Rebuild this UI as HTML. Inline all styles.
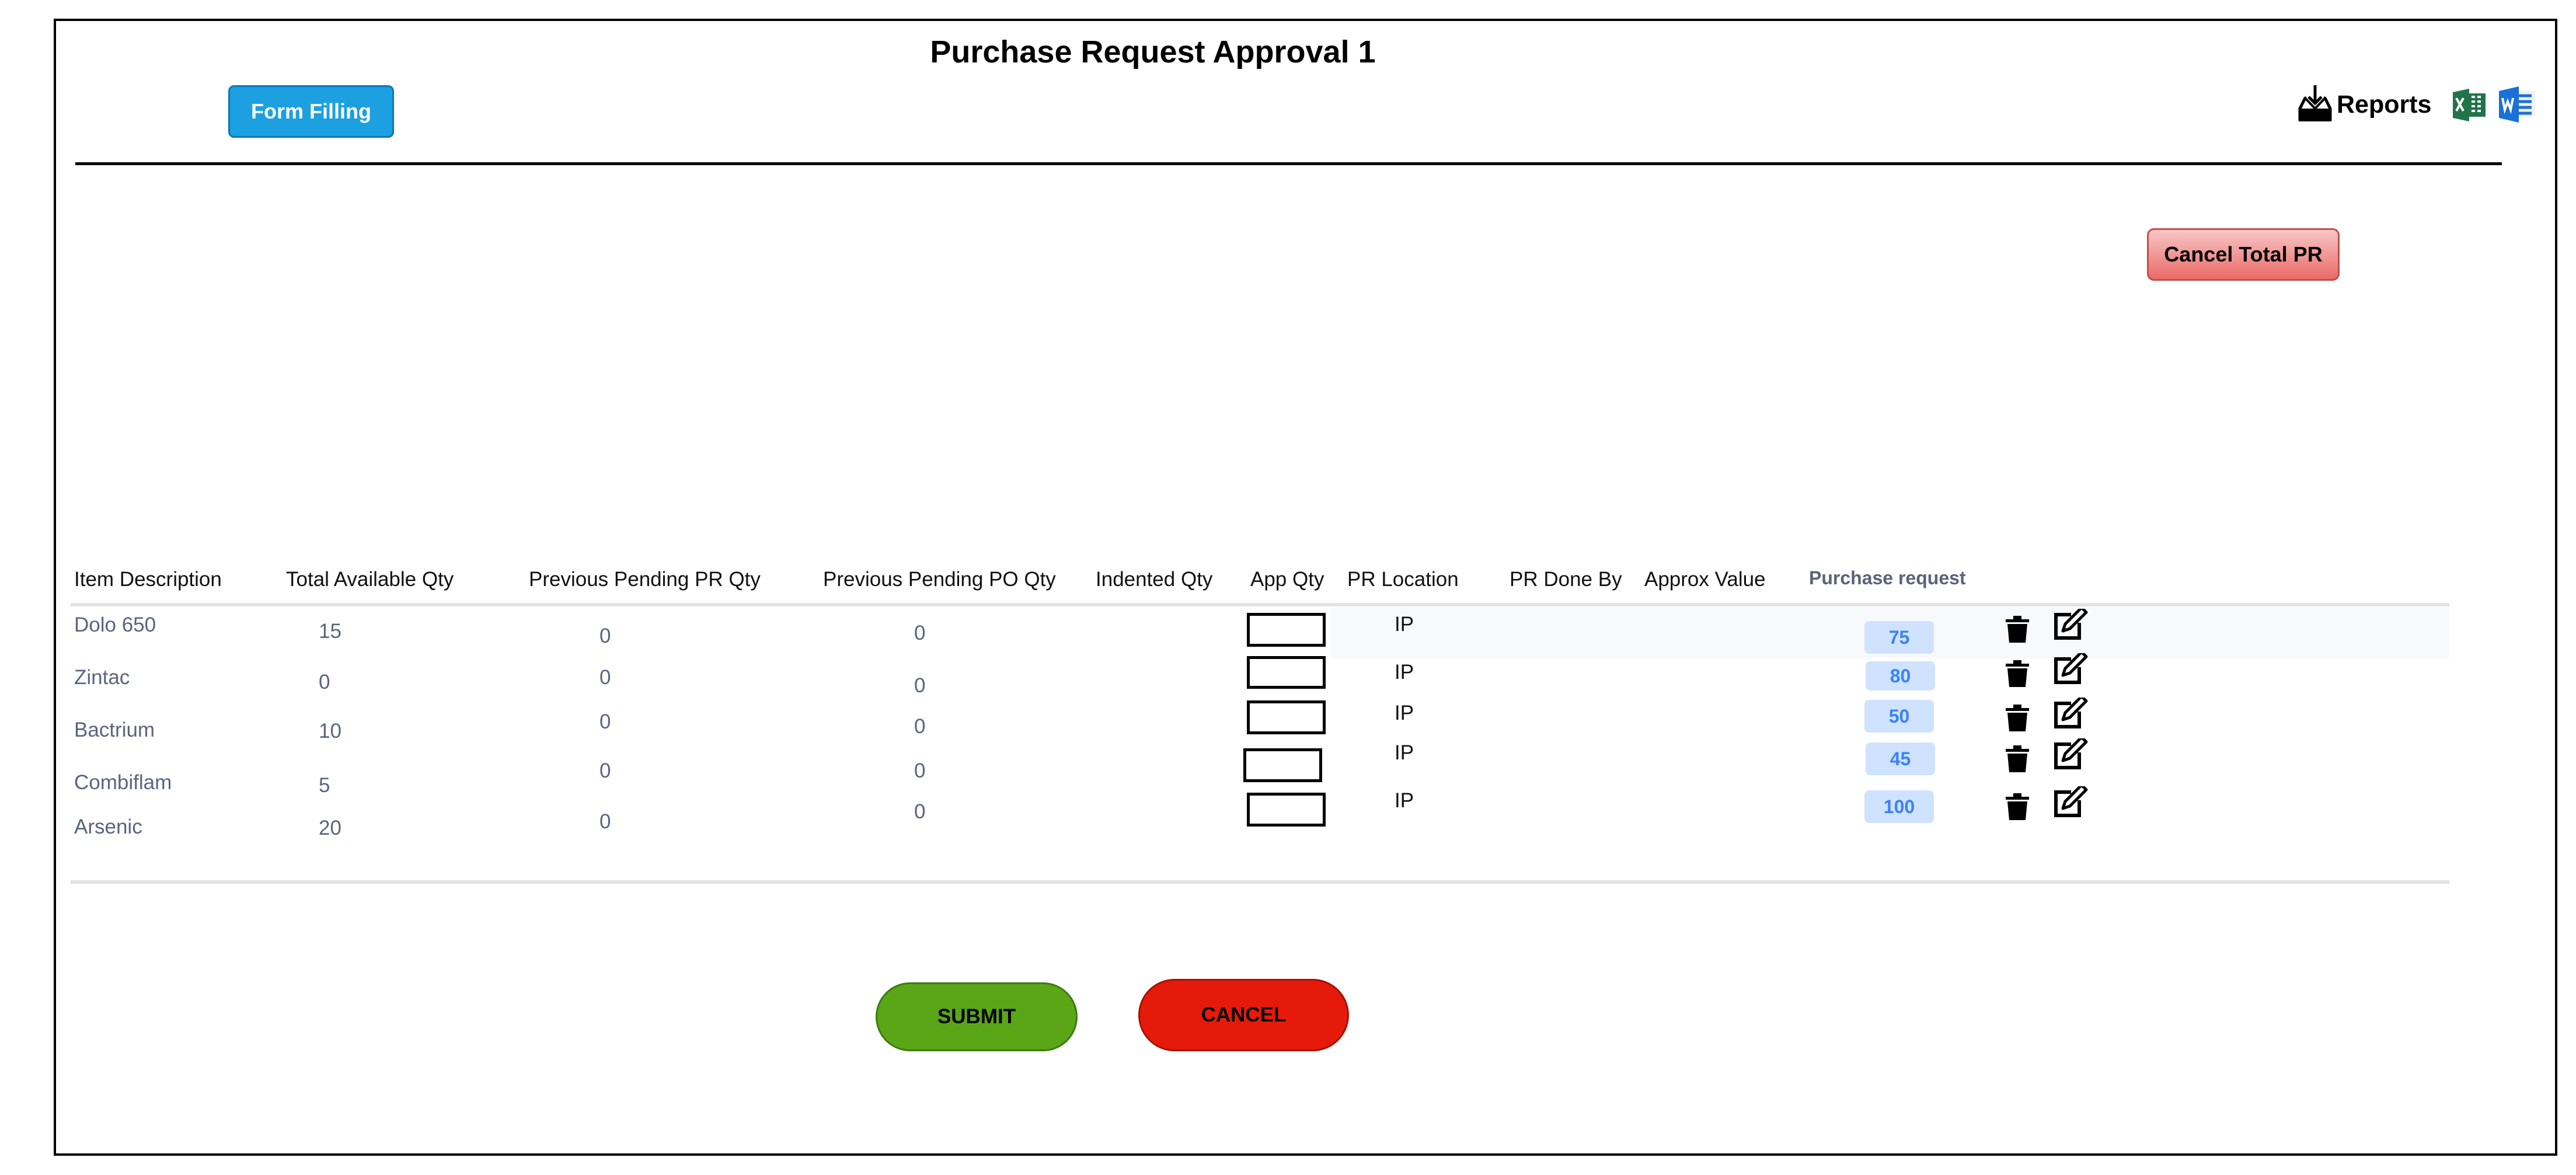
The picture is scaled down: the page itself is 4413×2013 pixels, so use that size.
<!DOCTYPE html>
<html><head><meta charset="utf-8"><style>
*{margin:0;padding:0;box-sizing:border-box}
body{width:4413px;height:2013px;background:#fff;position:relative;overflow:hidden;font-family:"Liberation Sans",sans-serif}
.a{position:absolute;white-space:nowrap;line-height:1}
.h{font-size:35px;color:#111}
.n{font-size:35px;color:#5a6480}
.box{position:absolute;width:135px;height:58px;border:5px solid #000;background:#fff}
.ip{font-size:35px;color:#111}
.bd{position:absolute;width:119px;height:56px;background:#cfe2ff;border-radius:8px;color:#3b82f6;font-weight:bold;font-size:32px;display:flex;align-items:center;justify-content:center}
</style></head><body>
<div style="position:absolute;left:92px;top:32px;width:4289px;height:1948px;border:4px solid #000"></div>
<div class="a" style="left:0;width:3950px;text-align:center;top:62px;font-size:54px;font-weight:bold">Purchase Request Approval 1</div>
<div style="position:absolute;left:391px;top:146px;width:284px;height:90px;background:#1ca0e0;border:3px solid #0a78b8;border-radius:10px;color:#fff;font-weight:bold;font-size:36px;display:flex;align-items:center;justify-content:center">Form Filling</div>
<svg style="position:absolute;left:3937px;top:146px" width="58" height="62" viewBox="0 0 58 62"><path d="M14 22h-2L3 40v20h52V40L46 22h-2" stroke="#000" stroke-width="5" fill="none" stroke-linejoin="round"/><rect x="3" y="40" width="52" height="20" rx="2" fill="#000"/><path d="M29 0v30M18 20l11 11 11-11" stroke="#000" stroke-width="5" fill="none"/><path d="M12 22l17 18 17-18" stroke="#000" stroke-width="4" fill="none"/></svg>
<div class="a" style="left:4003px;top:158px;font-size:43px;font-weight:bold">Reports</div>
<svg style="position:absolute;left:4202px;top:152px" width="56" height="56" viewBox="0 0 56 56"><path d="M0 6 28 0v56L0 50z" fill="#21734a"/><rect x="26" y="8" width="30" height="40" fill="#21734a"/><path d="M6 16l12 22M18 16 6 38" stroke="#fff" stroke-width="4"/><path d="M32 14h6M42 14h6M32 22h6M42 22h6M32 30h6M42 30h6M32 38h6M42 38h6" stroke="#fff" stroke-width="4"/></svg>
<svg style="position:absolute;left:4281px;top:148px" width="62" height="62" viewBox="0 0 62 62"><rect x="30" y="8" width="32" height="44" fill="#eef2f7"/><path d="M0 8 34 0v62L0 54z" fill="#1b6fd8"/><path d="M34 16h22M34 26h22M34 36h22M34 46h22" stroke="#1b6fd8" stroke-width="5"/><path d="M6 20l4 20 5-14 5 14 4-20" stroke="#fff" stroke-width="4" fill="none"/></svg>
<div style="position:absolute;left:129px;top:278px;width:4157px;height:5px;background:#000"></div>
<div style="position:absolute;left:3678px;top:391px;width:330px;height:90px;background:linear-gradient(#f8c6c6,#ea6a66);border:3px solid #c0504d;border-radius:12px;font-weight:bold;font-size:36px;display:flex;align-items:center;justify-content:center">Cancel Total PR</div>
<div class="a h" style="left:127px;top:975px">Item Description</div>
<div class="a h" style="left:490px;top:975px">Total Available Qty</div>
<div class="a h" style="left:906px;top:975px">Previous Pending PR Qty</div>
<div class="a h" style="left:1410px;top:975px">Previous Pending PO Qty</div>
<div class="a h" style="left:1877px;top:975px">Indented Qty</div>
<div class="a h" style="left:2142px;top:975px">App Qty</div>
<div class="a h" style="left:2308px;top:975px">PR Location</div>
<div class="a h" style="left:2586px;top:975px">PR Done By</div>
<div class="a h" style="left:2817px;top:975px">Approx Value</div>
<div class="a" style="left:3099px;top:974px;font-size:32px;font-weight:bold;color:#5a6478">Purchase request</div>
<div style="position:absolute;left:121px;top:1033px;width:4075px;height:6px;background:#e2e3e6"></div>
<div style="position:absolute;left:2280px;top:1040px;width:1916px;height:88px;background:#f8f9fb"></div>
<div style="position:absolute;left:121px;top:1508px;width:4075px;height:6px;background:#e2e3e6"></div>
<div class="a n" style="left:127px;top:1053px">Dolo 650</div>
<div class="a n" style="left:127px;top:1143px">Zintac</div>
<div class="a n" style="left:127px;top:1233px">Bactrium</div>
<div class="a n" style="left:127px;top:1323px">Combiflam</div>
<div class="a n" style="left:127px;top:1399px">Arsenic</div>
<div class="a n" style="left:546px;top:1064px">15</div>
<div class="a n" style="left:546px;top:1151px">0</div>
<div class="a n" style="left:546px;top:1235px">10</div>
<div class="a n" style="left:546px;top:1328px">5</div>
<div class="a n" style="left:546px;top:1401px">20</div>
<div class="a n" style="left:1027px;top:1072px">0</div>
<div class="a n" style="left:1027px;top:1143px">0</div>
<div class="a n" style="left:1027px;top:1219px">0</div>
<div class="a n" style="left:1027px;top:1303px">0</div>
<div class="a n" style="left:1027px;top:1390px">0</div>
<div class="a n" style="left:1566px;top:1067px">0</div>
<div class="a n" style="left:1566px;top:1157px">0</div>
<div class="a n" style="left:1566px;top:1227px">0</div>
<div class="a n" style="left:1566px;top:1303px">0</div>
<div class="a n" style="left:1566px;top:1373px">0</div>
<div class="box" style="left:2136px;top:1050px"></div>
<div class="box" style="left:2136px;top:1124px;height:56px"></div>
<div class="box" style="left:2136px;top:1200px"></div>
<div class="box" style="left:2130px;top:1282px"></div>
<div class="box" style="left:2136px;top:1358px"></div>
<div class="a ip" style="left:2389px;top:1052px">IP</div>
<div class="a ip" style="left:2389px;top:1134px">IP</div>
<div class="a ip" style="left:2389px;top:1204px">IP</div>
<div class="a ip" style="left:2389px;top:1272px">IP</div>
<div class="a ip" style="left:2389px;top:1354px">IP</div>
<div class="bd" style="left:3194px;top:1064px">75</div>
<div class="bd" style="left:3196px;top:1133px;height:50px">80</div>
<div class="bd" style="left:3194px;top:1199px">50</div>
<div class="bd" style="left:3196px;top:1272px">45</div>
<div class="bd" style="left:3194px;top:1354px">100</div>
<svg width="0" height="0" style="position:absolute"><defs>
<g id="t"><rect x="0" y="6" width="40" height="5" fill="#000"/><rect x="13" y="0" width="14" height="6" fill="#000"/><path d="M3 14h34l-3 32H6z" fill="#000"/></g>
<g id="e"><path d="M30 10H4v40h40V24" stroke="#000" stroke-width="6" fill="none"/><path d="M16 38l4-12 28-28 8 8-28 28z" stroke="#000" stroke-width="5" fill="#fff" stroke-linejoin="round"/></g>
</defs></svg>
<svg style="position:absolute;left:3436px;top:1055px" width="40" height="46"><use href="#t"/></svg>
<svg style="position:absolute;left:3436px;top:1131px" width="40" height="46"><use href="#t"/></svg>
<svg style="position:absolute;left:3436px;top:1207px" width="40" height="46"><use href="#t"/></svg>
<svg style="position:absolute;left:3436px;top:1277px" width="40" height="46"><use href="#t"/></svg>
<svg style="position:absolute;left:3436px;top:1359px" width="40" height="46"><use href="#t"/></svg>
<svg style="position:absolute;left:3518px;top:1043px" width="60" height="56"><use href="#e"/></svg>
<svg style="position:absolute;left:3518px;top:1119px" width="60" height="56"><use href="#e"/></svg>
<svg style="position:absolute;left:3518px;top:1195px" width="60" height="56"><use href="#e"/></svg>
<svg style="position:absolute;left:3518px;top:1265px" width="60" height="56"><use href="#e"/></svg>
<svg style="position:absolute;left:3518px;top:1347px" width="60" height="56"><use href="#e"/></svg>
<div style="position:absolute;left:1500px;top:1683px;width:346px;height:118px;background:#5aa617;border:3px solid #3d7a0e;border-radius:59px;font-weight:bold;font-size:35px;display:flex;align-items:center;justify-content:center">SUBMIT</div>
<div style="position:absolute;left:1950px;top:1677px;width:361px;height:124px;background:#e61a0a;border:3px solid #a81005;border-radius:62px;font-weight:bold;font-size:35px;display:flex;align-items:center;justify-content:center">CANCEL</div>
</body></html>
